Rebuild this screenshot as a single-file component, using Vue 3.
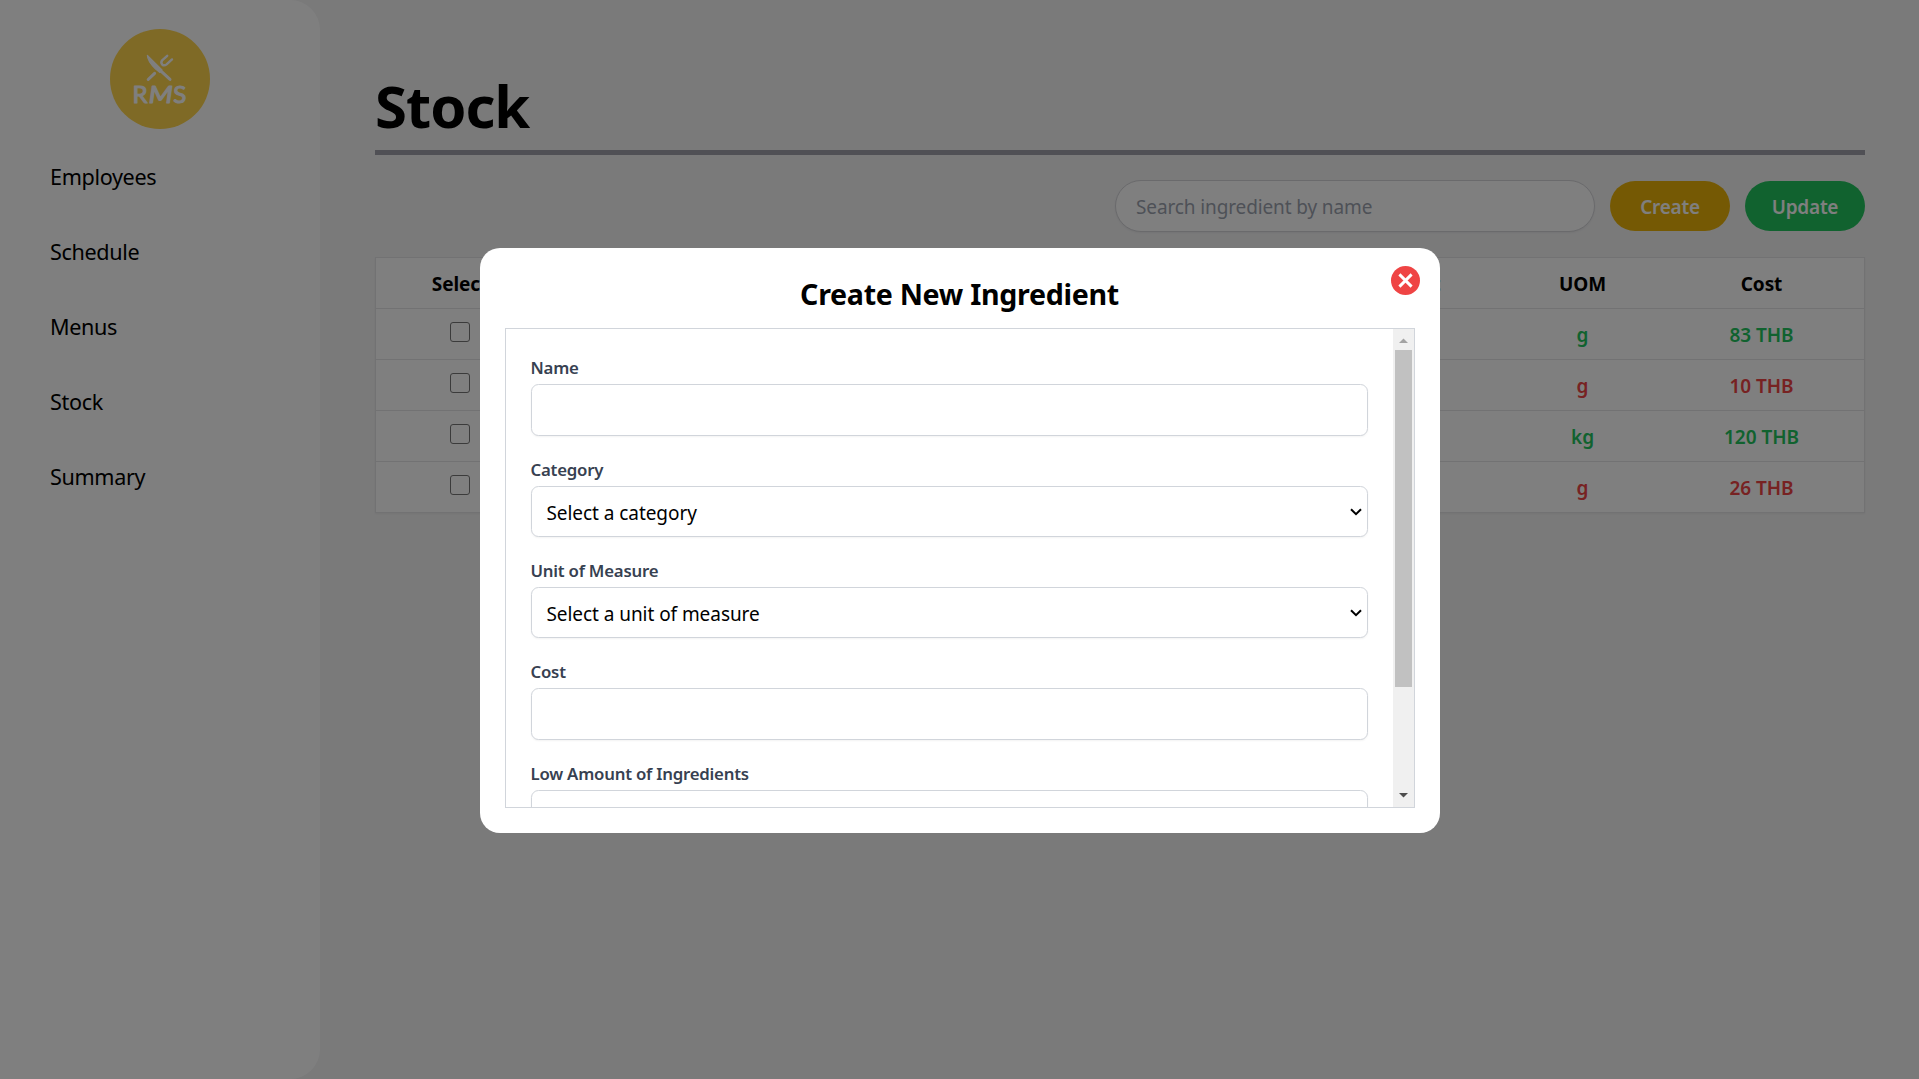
<script setup>
const navItems = ['Employees', 'Schedule', 'Menus', 'Stock', 'Summary']

const rows = [
  { uom: 'g', cost: '83 THB', low: false },
  { uom: 'g', cost: '10 THB', low: true },
  { uom: 'kg', cost: '120 THB', low: false },
  { uom: 'g', cost: '26 THB', low: true },
]

const fields = [
  { label: 'Name', type: 'input' },
  { label: 'Category', type: 'select', placeholder: 'Select a category' },
  { label: 'Unit of Measure', type: 'select', placeholder: 'Select a unit of measure' },
  { label: 'Cost', type: 'input' },
  { label: 'Low Amount of Ingredients', type: 'input' },
]
</script>

<template>
  <div class="page">
    <aside class="sidebar">
      <svg class="logo" viewBox="0 0 100 100">
        <circle cx="50" cy="50" r="50" fill="#ffd44c" />
        <g fill="none" stroke="#fff" stroke-linecap="round" stroke-linejoin="round">
          <path d="M38.2 50.5 L44.6 44.3" stroke-width="3" />
          <path d="M50.5 41.7 L60 50.4" stroke-width="3" />
          <path d="M57.2 26.8 L52.4 31.1 Q50.4 33.5 52.2 35.5 Q54.2 37.3 56.6 35.3 L62 30.4" stroke-width="2.4" />
        </g>
        <path d="M37.4 26.5 Q37.4 31.9 45.6 40.1 L50 43.5 L52 40.9 Z" fill="#fff" stroke="#fff" stroke-width="1.2" stroke-linejoin="round" />
        <text y="74.4" class="logo-text">
          <tspan x="22.6">R</tspan><tspan x="38.8" class="slant" textLength="24" lengthAdjust="spacingAndGlyphs">M</tspan><tspan x="63.2">S</tspan>
        </text>
      </svg>
      <nav class="nav">
        <a v-for="item in navItems" :key="item">{{ item }}</a>
      </nav>
    </aside>

    <main class="main">
      <h1>Stock</h1>
      <div class="toolbar">
        <div class="search"><span>Search ingredient by name</span></div>
        <button class="btn create">Create</button>
        <button class="btn update">Update</button>
      </div>
      <div class="table">
        <div class="tr th">
          <span>Select</span><span></span><span>Amount</span><span>UOM</span><span>Cost</span>
        </div>
        <div v-for="(row, i) in rows" :key="i" class="tr" :class="row.low ? 'low' : 'ok'">
          <span><i class="checkbox"></i></span><span></span><span></span>
          <span>{{ row.uom }}</span><span>{{ row.cost }}</span>
        </div>
      </div>
    </main>

    <div class="overlay">
      <section class="modal">
        <button class="close" aria-label="Close">
          <svg viewBox="0 0 29 29">
            <circle cx="14.5" cy="14.5" r="14.5" fill="#ef4444" />
            <path d="M8.4 8.4 L20.6 20.6 M20.6 8.4 L8.4 20.6" stroke="#fff" stroke-width="2.9" />
          </svg>
        </button>
        <h2>Create New Ingredient</h2>
        <div class="scroller">
          <form class="form">
            <div v-for="f in fields" :key="f.label" class="field">
              <label>{{ f.label }}</label>
              <div class="control" :class="f.type">
                <template v-if="f.type === 'select'">
                  <span>{{ f.placeholder }}</span>
                  <svg class="chevron" viewBox="0 0 12 8"><path d="M1 1.2 L6 6.2 L11 1.2" fill="none" stroke="#000" stroke-width="2" /></svg>
                </template>
              </div>
            </div>
          </form>
          <div class="scrollbar">
            <svg class="arrow" viewBox="0 0 21 21"><path d="M6 14 L10.5 9.4 L15 14 Z" fill="#a3a3a3" /></svg>
            <div class="thumb"></div>
            <svg class="arrow bottom" viewBox="0 0 21 21"><path d="M6 7 L10.5 11.6 L15 7 Z" fill="#4d4d4d" /></svg>
          </div>
        </div>
      </section>
    </div>
  </div>
</template>

<style>
body {
  margin: 0;
  overflow: hidden;
}
</style>

<style scoped>
* {
  box-sizing: border-box;
}
.page {
  display: flex;
  width: 100vw;
  height: 100vh;
  overflow: hidden;
  background: #f4f4f5;
  color: #000;
  font-family: "Noto Sans", "Open Sans", sans-serif;
  font-size: 19px;
  white-space: nowrap;
}
.sidebar {
  display: flex;
  flex-direction: column;
  flex: none;
  align-items: center;
  width: 320px;
  padding-top: 29px;
  background: #fff;
  border-radius: 0 30px 30px 0;
}
.logo {
  flex: none;
  width: 100px;
  height: 100px;
}
.logo-text {
  fill: #fff;
  stroke: #fff;
  stroke-width: 1.1px;
  stroke-linejoin: round;
  font: 400 24px "Lato", sans-serif;
}
.slant {
  font-style: italic;
}
.nav {
  display: flex;
  flex-direction: column;
  align-self: stretch;
  padding: 10px 0 0 50px;
}
.nav a {
  height: 75px;
  font-size: 21.6px;
  line-height: 75px;
  letter-spacing: -0.35px;
}
.main {
  flex: 1;
  padding: 75px 54px 0 55px;
}
h1 {
  height: 80px;
  margin: 0;
  border-bottom: 5px solid #a1a1aa;
  font-size: 58px;
  line-height: 62px;
  letter-spacing: -1px;
}
.toolbar {
  display: flex;
  justify-content: flex-end;
  align-items: center;
  gap: 15px;
  height: 52px;
  margin: 25px 0;
}
.search {
  display: flex;
  align-items: center;
  width: 480px;
  height: 52px;
  padding: 2px 0 0 20px;
  border: 1px solid #d4d4d8;
  border-radius: 26px;
  background: #fff;
  box-shadow: 0 1px 2px rgba(0, 0, 0, 0.05);
  color: #9ca3af;
  letter-spacing: -0.12px;
}
.btn {
  width: 120px;
  height: 50px;
  padding: 2px 0 0;
  border: 0;
  border-radius: 25px;
  color: #fff;
  font: 600 19px "Noto Sans", sans-serif;
  letter-spacing: -0.25px;
}
.create {
  background: #eab308;
}
.update {
  background: #22c55e;
}
.table {
  border: 1px solid #e4e4e7;
  background: #fff;
  box-shadow: 0 1px 2px rgba(0, 0, 0, 0.05);
}
.tr {
  display: grid;
  grid-template-columns: 168px 755px 207px 153px 205px;
  height: 51px;
  border-bottom: 1px solid #e4e4e7;
  font-weight: 600;
  line-height: 52px;
  letter-spacing: -0.05px;
  text-align: center;
}
.tr:last-child {
  height: 50px;
  border-bottom: 0;
}
.th {
  font-weight: 700;
  letter-spacing: -0.1px;
}
.ok {
  color: #22c55e;
}
.low {
  color: #ef4444;
}
.checkbox {
  display: block;
  width: 20px;
  height: 20px;
  margin: 13px auto 0;
  border: 1.5px solid #767676;
  border-radius: 3px;
  background: #fff;
}
.overlay {
  position: fixed;
  inset: 0;
  display: flex;
  align-items: center;
  justify-content: center;
  padding-top: 2px;
  background: rgba(0, 0, 0, 0.5);
}
.modal {
  position: relative;
  width: 960px;
  height: 585px;
  padding: 25px;
  border-radius: 20px;
  background: #fff;
}
.close {
  position: absolute;
  top: 18px;
  right: 20px;
  width: 29px;
  height: 29px;
  padding: 0;
  border: 0;
  background: none;
}
.close svg {
  display: block;
}
h2 {
  height: 55px;
  margin: 0;
  font-size: 28.6px;
  line-height: 41px;
  letter-spacing: -0.3px;
  text-align: center;
}
.scroller {
  display: flex;
  height: 480px;
  overflow: hidden;
  border: 1px solid #d1d5db;
}
.form {
  flex: 1;
  padding: 25px;
}
.field {
  margin-bottom: 20px;
}
label {
  display: block;
  height: 30px;
  color: #374151;
  font-size: 16.8px;
  font-weight: 600;
  line-height: 28px;
  letter-spacing: -0.22px;
}
.control {
  display: flex;
  align-items: center;
  justify-content: space-between;
  height: 52px;
  padding: 0 5px 0 15px;
  border: 1px solid #d1d5db;
  border-radius: 7.5px;
  background: #fff;
  box-shadow: 0 1px 2px rgba(0, 0, 0, 0.05);
}
.select {
  height: 51px;
  letter-spacing: -0.06px;
}
.select span {
  padding-top: 2px;
}
.chevron {
  width: 12px;
  height: 8px;
}
.scrollbar {
  display: flex;
  flex-direction: column;
  width: 21px;
  background: #f0f0f0;
}
.arrow {
  flex: none;
  width: 21px;
  height: 21px;
}
.thumb {
  width: 17px;
  height: 337px;
  margin-left: 2px;
  background: #c1c1c1;
}
.bottom {
  margin-top: auto;
}
</style>
